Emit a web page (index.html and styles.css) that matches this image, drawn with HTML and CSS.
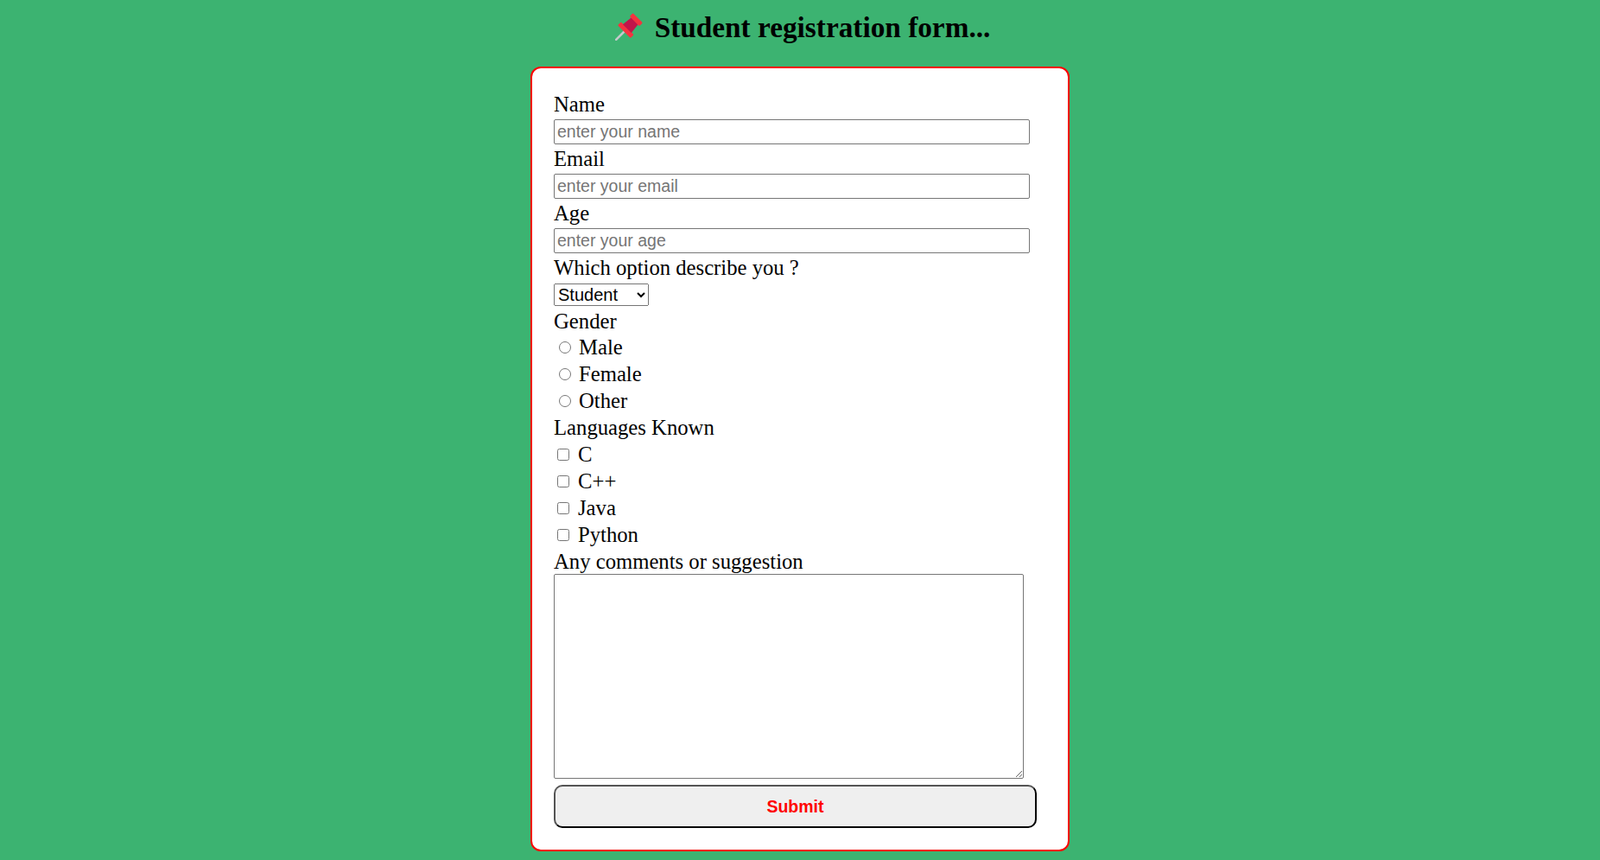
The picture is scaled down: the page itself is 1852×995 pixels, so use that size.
FILE: index.html
```html
<!DOCTYPE html>
<html lang="en">
<head>
<meta charset="utf-8">
<title>Student registration form</title>
<link rel="stylesheet" href="styles.css">
</head>
<body>
<h1 class="title"><svg class="pin" viewBox="0 0 32 32" aria-hidden="true"><path d="M1.2 30.8 L12 20" stroke="#c4c9cb" stroke-width="2.6" stroke-linecap="round" fill="none"/><g transform="rotate(45 16 16)"><rect x="5.5" y="18.5" width="21" height="5.5" rx="1.2" fill="#f5333f"/><path d="M10.5 6 H21.5 L23 19 H9 Z" fill="#c2154a"/><rect x="8" y="1.5" width="16" height="5.5" rx="1.2" fill="#f5333f"/></g></svg>Student registration form...</h1>
<main class="card">
<form class="form">
<label class="line" for="n">Name</label>
<div class="field"><input class="text" id="n" type="text" placeholder="enter your name"></div>
<label class="line" for="e">Email</label>
<div class="field"><input class="text" id="e" type="text" placeholder="enter your email"></div>
<label class="line" for="a">Age</label>
<div class="field"><input class="text" id="a" type="text" placeholder="enter your age"></div>
<label class="line" for="o">Which option describe you ?</label>
<div class="line"><select class="select" id="o"><option>Student</option></select></div>
<div class="line gender">Gender</div>
<label class="line choice"><input class="radio" type="radio" name="g"><span>Male</span></label>
<label class="line choice"><input class="radio" type="radio" name="g"><span>Female</span></label>
<label class="line choice"><input class="radio" type="radio" name="g"><span>Other</span></label>
<div class="line">Languages Known</div>
<label class="line choice"><input class="check" type="checkbox"><span>C</span></label>
<label class="line choice"><input class="check" type="checkbox"><span>C++</span></label>
<label class="line choice"><input class="check" type="checkbox"><span>Java</span></label>
<label class="line choice"><input class="check" type="checkbox"><span>Python</span></label>
<label class="line" for="c">Any comments or suggestion</label>
<textarea class="comments" id="c"></textarea>
<button class="submit" type="button">Submit</button>
</form>
</main>
</body>
</html>
```
FILE: styles.css
```css
* { box-sizing: border-box; }
html, body { margin: 0; height: 100%; }
body {
  background: #3cb371;
  color: #000;
  font-family: "Liberation Serif", serif;
  overflow: hidden;
}
.title {
  margin: 11px 0 24px;
  height: 42px;
  font-size: 33.3px;
  line-height: 42px;
  font-weight: 700;
  text-align: center;
}
.pin {
  width: 32px;
  height: 32px;
  margin: -1px 14px 0 6px;
  vertical-align: -4px;
}
.card {
  width: 624px;
  height: 908px;
  margin: 0 auto;
  padding: 26px 26px 26px 25px;
  background: #fff;
  border: 2px solid #f00;
  border-radius: 12px;
}
.form {
  display: flex;
  flex-direction: column;
  align-items: flex-start;
  font-size: 24.7px;
}
.line {
  display: flex;
  align-items: center;
  height: 31px;
  line-height: 31px;
}
.gender { height: 30px; }
.field {
  display: flex;
  align-items: center;
  height: 32px;
}
.text {
  width: 551px;
  height: 29px;
  padding: 1px 3px;
  font: 19.5px "Liberation Sans", Arial, sans-serif;
  border: 1px solid #767676;
  border-radius: 2px;
}
.text::placeholder { color: #757575; }
.select {
  width: 110px;
  height: 26px;
  font: 20px "Liberation Sans", Arial, sans-serif;
}
.radio {
  width: 14px;
  height: 14px;
  margin: 0 3px 0 6px;
}
.check {
  width: 14px;
  height: 14px;
  margin: 0 3px 0 4px;
}
.choice span { margin-left: 6px; }
.check + span { margin-left: 7px; }
.comments {
  width: 544px;
  height: 237px;
  margin: -1px 0 0;
  border: 1px solid #767676;
  border-radius: 2px;
}
.submit {
  width: 559px;
  height: 50px;
  margin-top: 7px;
  background: #efefef;
  color: #f00;
  font: 700 19.5px "Liberation Sans", Arial, sans-serif;
  border: 2px outset #000;
  border-radius: 10px;
}
```
